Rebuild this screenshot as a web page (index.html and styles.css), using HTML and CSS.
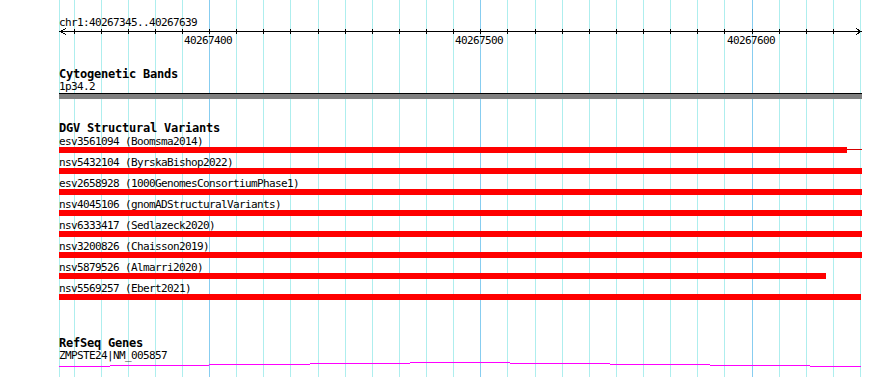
FILE: index.html
```html
<!DOCTYPE html>
<html lang="en">
<head>
    <meta charset="UTF-8">
    <meta name="viewport" content="width=device-width, initial-scale=1.0">
    <title>chr1:40267345..40267639</title>
    <link rel="stylesheet" href="styles.css">
</head>
<body>
    <div class="browser">
        <!-- grid behind the tracks, one line per 10 bp -->
        <svg class="grid" width="890" height="377" shape-rendering="crispEdges">
            <g class="minor">
                <line x1="59.5" y1="0" x2="59.5" y2="377"/>
                <line x1="74.5" y1="0" x2="74.5" y2="377"/>
                <line x1="101.5" y1="0" x2="101.5" y2="377"/>
                <line x1="128.5" y1="0" x2="128.5" y2="377"/>
                <line x1="155.5" y1="0" x2="155.5" y2="377"/>
                <line x1="182.5" y1="0" x2="182.5" y2="377"/>
                <line x1="236.5" y1="0" x2="236.5" y2="377"/>
                <line x1="263.5" y1="0" x2="263.5" y2="377"/>
                <line x1="290.5" y1="0" x2="290.5" y2="377"/>
                <line x1="318.5" y1="0" x2="318.5" y2="377"/>
                <line x1="345.5" y1="0" x2="345.5" y2="377"/>
                <line x1="372.5" y1="0" x2="372.5" y2="377"/>
                <line x1="399.5" y1="0" x2="399.5" y2="377"/>
                <line x1="426.5" y1="0" x2="426.5" y2="377"/>
                <line x1="453.5" y1="0" x2="453.5" y2="377"/>
                <line x1="507.5" y1="0" x2="507.5" y2="377"/>
                <line x1="535.5" y1="0" x2="535.5" y2="377"/>
                <line x1="562.5" y1="0" x2="562.5" y2="377"/>
                <line x1="589.5" y1="0" x2="589.5" y2="377"/>
                <line x1="616.5" y1="0" x2="616.5" y2="377"/>
                <line x1="643.5" y1="0" x2="643.5" y2="377"/>
                <line x1="670.5" y1="0" x2="670.5" y2="377"/>
                <line x1="697.5" y1="0" x2="697.5" y2="377"/>
                <line x1="724.5" y1="0" x2="724.5" y2="377"/>
                <line x1="779.5" y1="0" x2="779.5" y2="377"/>
                <line x1="806.5" y1="0" x2="806.5" y2="377"/>
                <line x1="833.5" y1="0" x2="833.5" y2="377"/>
                <line x1="860.5" y1="0" x2="860.5" y2="377"/>
            </g>
            <g class="major">
                <line x1="209.5" y1="0" x2="209.5" y2="377"/>
                <line x1="480.5" y1="0" x2="480.5" y2="377"/>
                <line x1="752.5" y1="0" x2="752.5" y2="377"/>
            </g>
        </svg>

        <div class="tracks">
            <div class="locus">chr1:40267345..40267639</div>

            <svg class="ruler" width="803" height="20" shape-rendering="crispEdges">
                <path class="axis" d="M1 3.5H802 M7 0.5L1 3.5L7 6.5 M797 0.5L802 3.5L797 6.5"/>
                <path class="axis" d="M15.5 1V6 M42.5 1V6 M69.5 1V6 M96.5 1V6 M123.5 1V6 M150.5 1V6 M177.5 1V6 M204.5 1V6 M231.5 1V6 M259.5 1V6 M286.5 1V6 M313.5 1V6 M340.5 1V6 M367.5 1V6 M394.5 1V6 M421.5 1V6 M448.5 1V6 M476.5 1V6 M503.5 1V6 M530.5 1V6 M557.5 1V6 M584.5 1V6 M611.5 1V6 M638.5 1V6 M665.5 1V6 M693.5 1V6 M720.5 1V6 M747.5 1V6 M774.5 1V6"/>
                <text class="tick-label" x="125" y="16">40267400</text>
                <text class="tick-label" x="396" y="16">40267500</text>
                <text class="tick-label" x="668" y="16">40267600</text>
            </svg>

            <div class="track track-cyto">
                <div class="track-title">Cytogenetic Bands</div>
                <div class="feature-label">1p34.2</div>
                <div class="band"></div>
            </div>

            <div class="track track-dgv">
                <div class="track-title">DGV Structural Variants</div>
                <div class="variant">
                    <div class="feature-label">esv3561094 (Boomsma2014)</div>
                    <div class="feature">
                        <div class="bar" style="width: 788px"></div>
                        <div class="connector"></div>
                    </div>
                </div>
                <div class="variant">
                    <div class="feature-label">nsv5432104 (ByrskaBishop2022)</div>
                    <div class="feature"><div class="bar" style="width: 803px"></div></div>
                </div>
                <div class="variant">
                    <div class="feature-label">esv2658928 (1000GenomesConsortiumPhase1)</div>
                    <div class="feature"><div class="bar" style="width: 803px"></div></div>
                </div>
                <div class="variant">
                    <div class="feature-label">nsv4045106 (gnomADStructuralVariants)</div>
                    <div class="feature"><div class="bar" style="width: 803px"></div></div>
                </div>
                <div class="variant">
                    <div class="feature-label">nsv6333417 (Sedlazeck2020)</div>
                    <div class="feature"><div class="bar" style="width: 803px"></div></div>
                </div>
                <div class="variant">
                    <div class="feature-label">nsv3200826 (Chaisson2019)</div>
                    <div class="feature"><div class="bar" style="width: 803px"></div></div>
                </div>
                <div class="variant">
                    <div class="feature-label">nsv5879526 (Almarri2020)</div>
                    <div class="feature"><div class="bar" style="width: 767px"></div></div>
                </div>
                <div class="variant">
                    <div class="feature-label">nsv5569257 (Ebert2021)</div>
                    <div class="feature"><div class="bar" style="width: 802px"></div></div>
                </div>
            </div>

            <div class="track track-refseq">
                <div class="track-title">RefSeq Genes</div>
                <div class="feature-label">ZMPSTE24|NM_005857</div>
                <svg class="gene" width="803" height="8" shape-rendering="crispEdges">
                    <rect x="0" y="5" width="51" height="1"/>
                    <rect x="51" y="4" width="99" height="1"/>
                    <rect x="150" y="3" width="101" height="1"/>
                    <rect x="251" y="2" width="100" height="1"/>
                    <rect x="351" y="1" width="100" height="1"/>
                    <rect x="451" y="2" width="100" height="1"/>
                    <rect x="551" y="3" width="100" height="1"/>
                    <rect x="651" y="4" width="100" height="1"/>
                    <rect x="751" y="5" width="51" height="1"/>
                </svg>
            </div>
        </div>
    </div>
</body>
</html>
```

FILE: styles.css
```css
body {
    margin: 0;
    background-color: #fff;
    font-family: "DejaVu Sans Mono", monospace;
    color: #000;
}
.browser {
    position: relative;
    width: 890px;
    height: 377px;
    overflow: hidden;
}
.grid {
    position: absolute;
    top: 0;
    left: 0;
}
.grid .minor line {
    stroke: #aeeeee;
    stroke-width: 1;
}
.grid .major line {
    stroke: #87cdf0;
    stroke-width: 1;
}
.tracks {
    position: relative; /* sit above the grid */
    padding-left: 59px;
    width: 803px;
}
.locus,
.feature-label {
    font-size: 11px;
    line-height: 11px;
    height: 11px;
    letter-spacing: -0.62px;
    white-space: nowrap;
}
.locus {
    padding-top: 17px;
}
.ruler {
    display: block;
}
.ruler .axis {
    fill: none;
    stroke: #000;
    stroke-width: 1;
}
.tick-label {
    font-family: "DejaVu Sans Mono", monospace;
    font-size: 11px;
    letter-spacing: -0.62px;
    fill: #000;
}
.track-title {
    font-size: 12px;
    font-weight: bold;
    line-height: 11px;
    height: 11px;
    letter-spacing: -0.22px;
    white-space: nowrap;
}
.track-cyto {
    margin-top: 21px;
}
.track-cyto .feature-label {
    margin-top: 1px;
}
.band {
    margin-top: 1px;
    height: 5px;
    border-top: 1px solid #000;
    background-color: #808080;
}
.track-dgv {
    margin-top: 24px;
}
.track-dgv .track-title {
    margin-bottom: 2px;
}
.variant {
    margin-bottom: 4px;
}
.feature {
    display: flex;
    height: 6px;
}
.bar {
    height: 6px;
    background-color: #ff0000;
}
.connector {
    flex: 1;
    height: 1px;
    margin-top: 2px;
    background-color: #d40000;
}
.track-refseq {
    margin-top: 38px;
}
.track-refseq .feature-label {
    margin-top: 1px;
}
.gene {
    display: block;
}
.gene rect {
    fill: #ff00ff;
}
```
